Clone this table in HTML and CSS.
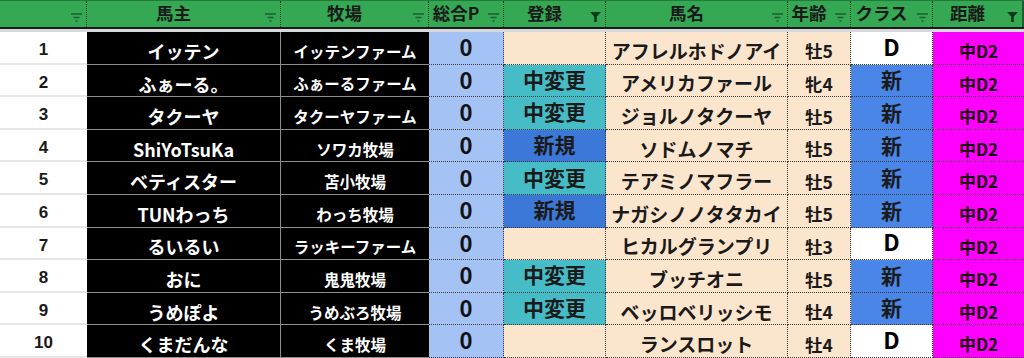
FILE: index.html
```html
<!DOCTYPE html>
<html lang="ja">
<head>
<meta charset="utf-8">
<title>馬主一覧</title>
<link rel="stylesheet" href="styles.css">
</head>
<body>
<div class="sheet">
  <div class="head">
    <div class="hc"><span class="ht"></span><span class="fi"><svg width="11" height="9" viewBox="0 0 11 9"><path d="M0 1h11M2.5 4.5h6M4.5 8h2" stroke="#1c5e30" stroke-width="1.4"/></svg></span></div>
    <div class="hc"><span class="ht">馬主</span><span class="fi"><svg width="11" height="9" viewBox="0 0 11 9"><path d="M0 1h11M2.5 4.5h6M4.5 8h2" stroke="#1c5e30" stroke-width="1.4"/></svg></span></div>
    <div class="hc"><span class="ht">牧場</span><span class="fi"><svg width="11" height="9" viewBox="0 0 11 9"><path d="M0 1h11M2.5 4.5h6M4.5 8h2" stroke="#1c5e30" stroke-width="1.4"/></svg></span></div>
    <div class="hc"><span class="ht">総合P</span><span class="fi"><svg width="11" height="9" viewBox="0 0 11 9"><path d="M0 1h11M2.5 4.5h6M4.5 8h2" stroke="#1c5e30" stroke-width="1.4"/></svg></span></div>
    <div class="hc"><span class="ht">登録</span><span class="fi"><svg width="11" height="10" viewBox="0 0 11 10"><path d="M0 0h11L6.8 4.5V10H4.2V4.5Z" fill="#0e3a1c"/></svg></span></div>
    <div class="hc"><span class="ht">馬名</span><span class="fi"><svg width="11" height="9" viewBox="0 0 11 9"><path d="M0 1h11M2.5 4.5h6M4.5 8h2" stroke="#1c5e30" stroke-width="1.4"/></svg></span></div>
    <div class="hc"><span class="ht">年齢</span><span class="fi"><svg width="11" height="9" viewBox="0 0 11 9"><path d="M0 1h11M2.5 4.5h6M4.5 8h2" stroke="#1c5e30" stroke-width="1.4"/></svg></span></div>
    <div class="hc"><span class="ht">クラス</span><span class="fi"><svg width="11" height="9" viewBox="0 0 11 9"><path d="M0 1h11M2.5 4.5h6M4.5 8h2" stroke="#1c5e30" stroke-width="1.4"/></svg></span></div>
    <div class="hc"><span class="ht">距離</span><span class="fi"><svg width="11" height="10" viewBox="0 0 11 10"><path d="M0 0h11L6.8 4.5V10H4.2V4.5Z" fill="#0e3a1c"/></svg></span></div>
  </div>
  <div class="band"></div>
  <div class="grid">
    <div class="c num">1</div><div class="c owner">イッテン</div><div class="c farm">イッテンファーム</div><div class="c pt">0</div><div class="c reg"></div><div class="c horse">アフレルホドノアイ</div><div class="c age">牡5</div><div class="c cls d">D</div><div class="c dist">中D2</div>
    <div class="c num">2</div><div class="c owner">ふぁーる。</div><div class="c farm">ふぁーるファーム</div><div class="c pt">0</div><div class="c reg chg">中変更</div><div class="c horse">アメリカファール</div><div class="c age">牝4</div><div class="c cls new">新</div><div class="c dist">中D2</div>
    <div class="c num">3</div><div class="c owner">タクーヤ</div><div class="c farm">タクーヤファーム</div><div class="c pt">0</div><div class="c reg chg">中変更</div><div class="c horse">ジョルノタクーヤ</div><div class="c age">牡5</div><div class="c cls new">新</div><div class="c dist">中D2</div>
    <div class="c num">4</div><div class="c owner">ShiYoTsuKa</div><div class="c farm">ソワカ牧場</div><div class="c pt">0</div><div class="c reg nw">新規</div><div class="c horse">ソドムノマチ</div><div class="c age">牡5</div><div class="c cls new">新</div><div class="c dist">中D2</div>
    <div class="c num">5</div><div class="c owner">ベティスター</div><div class="c farm">苫小牧場</div><div class="c pt">0</div><div class="c reg chg">中変更</div><div class="c horse">テアミノマフラー</div><div class="c age">牡5</div><div class="c cls new">新</div><div class="c dist">中D2</div>
    <div class="c num">6</div><div class="c owner">TUNわっち</div><div class="c farm">わっち牧場</div><div class="c pt">0</div><div class="c reg nw">新規</div><div class="c horse">ナガシノノタタカイ</div><div class="c age">牡5</div><div class="c cls new">新</div><div class="c dist">中D2</div>
    <div class="c num">7</div><div class="c owner">るいるい</div><div class="c farm">ラッキーファーム</div><div class="c pt">0</div><div class="c reg"></div><div class="c horse">ヒカルグランプリ</div><div class="c age">牡3</div><div class="c cls d">D</div><div class="c dist">中D2</div>
    <div class="c num">8</div><div class="c owner">おに</div><div class="c farm">鬼鬼牧場</div><div class="c pt">0</div><div class="c reg chg">中変更</div><div class="c horse">ブッチオニ</div><div class="c age">牡5</div><div class="c cls new">新</div><div class="c dist">中D2</div>
    <div class="c num">9</div><div class="c owner">うめぽよ</div><div class="c farm">うめぶろ牧場</div><div class="c pt">0</div><div class="c reg chg">中変更</div><div class="c horse">ベッロベリッシモ</div><div class="c age">牡4</div><div class="c cls new">新</div><div class="c dist">中D2</div>
    <div class="c num">10</div><div class="c owner">くまだんな</div><div class="c farm">くま牧場</div><div class="c pt">0</div><div class="c reg"></div><div class="c horse">ランスロット</div><div class="c age">牡4</div><div class="c cls d">D</div><div class="c dist">中D2</div>
  </div>
</div>
</body>
</html>
```
FILE: styles.css
```css
* { box-sizing: border-box; }
body {
  margin: 0;
  background: #ffffff;
  font-family: "Noto Sans CJK JP", "Noto Sans", sans-serif;
  font-weight: 700;
  color: #1a1a1a;
}
.sheet {
  width: 1024px;
  height: 358px;
  overflow: hidden;
}
.head, .grid {
  display: grid;
  grid-template-columns: 87px 194px 148px 75px 102px 182px 63px 82px 91px;
}
.head {
  height: 29px;
  background: #34a853;
  border-top: 1px solid #237a3b;
  border-bottom: 2px solid #1c1c1c;
}
.hc {
  display: flex;
  align-items: center;
  border-right: 1px dotted #17451f;
  min-width: 0;
}
.hc:last-child { border-right: 2px solid #1c5e30; }
.ht {
  flex: 1;
  text-align: center;
  font-size: 17.5px;
  line-height: 1;
  color: #1a1a1a;
  padding-bottom: 3px;
}
.fi {
  width: 20px;
  display: flex;
  justify-content: flex-end;
  padding-right: 4px;
  padding-top: 6px;
}
.band {
  height: 3px;
  background: #d7d9dd;
}
.grid {
  grid-auto-rows: 32.6px;
}
.c {
  display: flex;
  justify-content: center;
  align-items: center;
  white-space: nowrap;
  line-height: 1.15;
  border-right: 1px dotted #3a3a3a;
  border-bottom: 1px dotted #3a3a3a;
}
.num {
  background: #ffffff;
  font-family: "Liberation Sans", Arial, sans-serif;
  font-size: 17px;
  color: #1a1a1a;
  align-items: flex-end;
  padding-bottom: 3px;
  border-right: none;
  border-bottom: 2px solid #e6e6e6;
}
.owner, .farm {
  background: #000000;
  color: #ffffff;
  align-items: flex-end;
  border-bottom: 1px solid #8d8d8d;
}
.owner {
  font-size: 18px;
  padding-bottom: 2px;
  border-right: 1px solid #8d8d8d;
}
.farm {
  font-size: 15.5px;
  padding-bottom: 3px;
  border-right: none;
}
.pt {
  background: #a4c2f4;
  font-size: 22px;
  color: #111111;
  padding-bottom: 2px;
}
.reg {
  background: #fce5cd;
  font-size: 21px;
  padding-bottom: 3px;
}
.reg.chg { background: #46bdc6; }
.reg.nw { background: #3c78d8; }
.horse {
  background: #fce5cd;
  font-size: 19px;
  align-items: flex-end;
  padding-bottom: 2px;
}
.age {
  background: #fce5cd;
  font-size: 17.5px;
  align-items: flex-end;
  padding-bottom: 2px;
}
.cls {
  font-size: 21px;
  padding-bottom: 2px;
}
.cls.new { background: #4a86e8; }
.cls.d {
  background: #ffffff;
  font-size: 23px;
  color: #000000;
  padding-bottom: 4px;
}
.dist {
  background: #ff00ff;
  font-size: 17px;
  color: #1a0010;
  align-items: flex-end;
  padding-bottom: 3px;
  border-right: none;
}
```
